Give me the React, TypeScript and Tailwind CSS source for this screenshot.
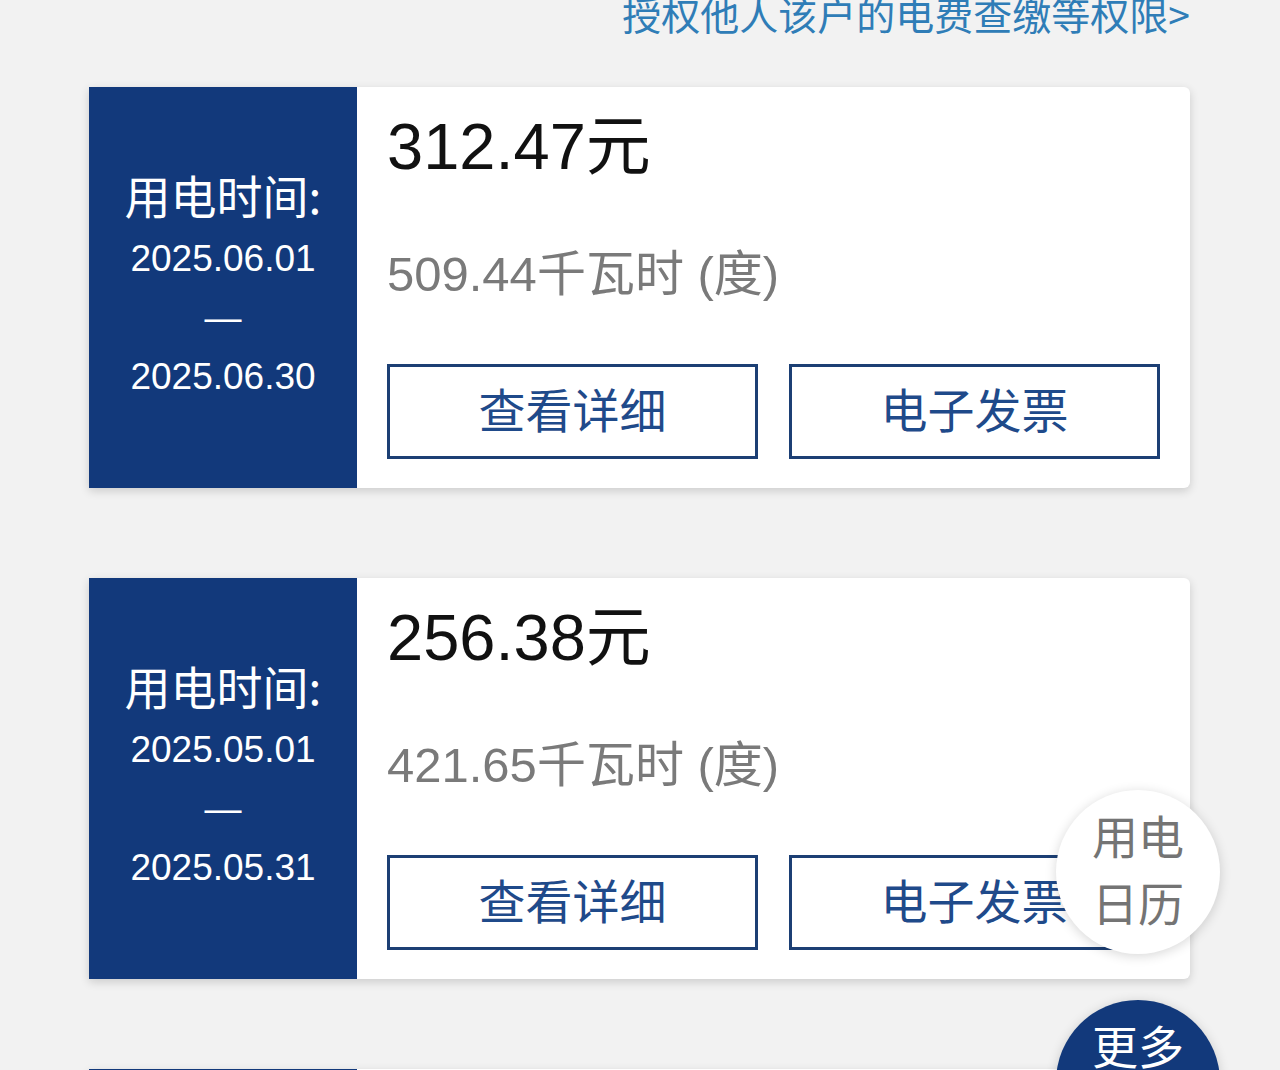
const sans = "font-['Liberation_Sans','Noto_Sans_CJK_SC',sans-serif]";
const cjk = "font-['Noto_Sans_CJK_SC','Liberation_Sans',sans-serif]";

type Bill = {
  id: number;
  amount: string;
  kwh: string;
  start: string;
  end: string;
};

const BILLS: Bill[] = [
  { id: 1, amount: "312.47", kwh: "509.44", start: "2025.06.01", end: "2025.06.30" },
  { id: 2, amount: "256.38", kwh: "421.65", start: "2025.05.01", end: "2025.05.31" },
  { id: 3, amount: "233.12", kwh: "386.20", start: "2025.04.01", end: "2025.04.30" },
];

const btnStyles =
  "flex-1 h-[95px] pb-[6px] border-[3px] border-[#1c3f74] bg-white flex items-center justify-center text-[47px] text-[#1f4a8a] " +
  cjk;

function BillCard({ bill }: { bill: Bill }) {
  return (
    <div className="flex h-[401px] bg-white rounded-r-[6px] shadow-[0_3px_10px_rgba(0,0,0,0.16)]">
      <div className={"w-[268px] shrink-0 bg-[#12397b] flex flex-col items-center justify-center text-white " + sans}>
        <div className={"h-[60px] leading-[50px] text-[46px] " + cjk}>用电时间:</div>
        <div className="leading-[60px] text-[37px]">{bill.start}</div>
        <div className="leading-[58px] text-[37px]">—</div>
        <div className="leading-[60px] text-[37px]">{bill.end}</div>
      </div>
      <div className={"flex-1 flex flex-col pl-[30px] pr-[30px] pt-[20px] " + sans}>
        <div className="h-[80px] leading-[80px] text-[65px] text-[#111]">{bill.amount}元</div>
        <div className="mt-[57px] h-[60px] leading-[60px] text-[49px] text-[#7a7a7a]">
          {bill.kwh}千瓦时 (度)
        </div>
        <div className="mt-[60px] flex gap-[31px]">
          <button className={btnStyles}>查看详细</button>
          <button className={btnStyles}>电子发票</button>
        </div>
      </div>
    </div>
  );
}

export default function App() {
  return (
    <div className="relative h-[1070px] overflow-hidden bg-[#f2f2f2]">
      <div className="h-[87px] pr-[90px] flex justify-end items-start">
        <a className={"-mt-[7px] leading-[40px] text-[39px] text-[#2f7db7] " + cjk}>授权他人该户的电费查缴等权限&gt;</a>
      </div>
      <div className="pl-[89px] pr-[90px] flex flex-col gap-[90px]">
        {BILLS.map((bill) => (
          <BillCard key={bill.id} bill={bill} />
        ))}
      </div>
      <button
        className={
          "absolute right-[60px] top-[790px] w-[164px] h-[164px] pb-[8px] rounded-full bg-white shadow-[0_2px_12px_rgba(0,0,0,0.16)] flex flex-col items-center justify-center text-[46px] leading-[67px] text-[#747474] " +
          cjk
        }
      >
        <span>用电</span>
        <span>日历</span>
      </button>
      <button
        className={
          "absolute right-[60px] top-[1000px] w-[164px] h-[164px] rounded-full bg-[#12397b] shadow-[0_2px_12px_rgba(0,0,0,0.16)] flex flex-col items-center pt-[11px] text-[46px] leading-[67px] text-white " +
          cjk
        }
      >
        <span>更多</span>
      </button>
    </div>
  );
}
